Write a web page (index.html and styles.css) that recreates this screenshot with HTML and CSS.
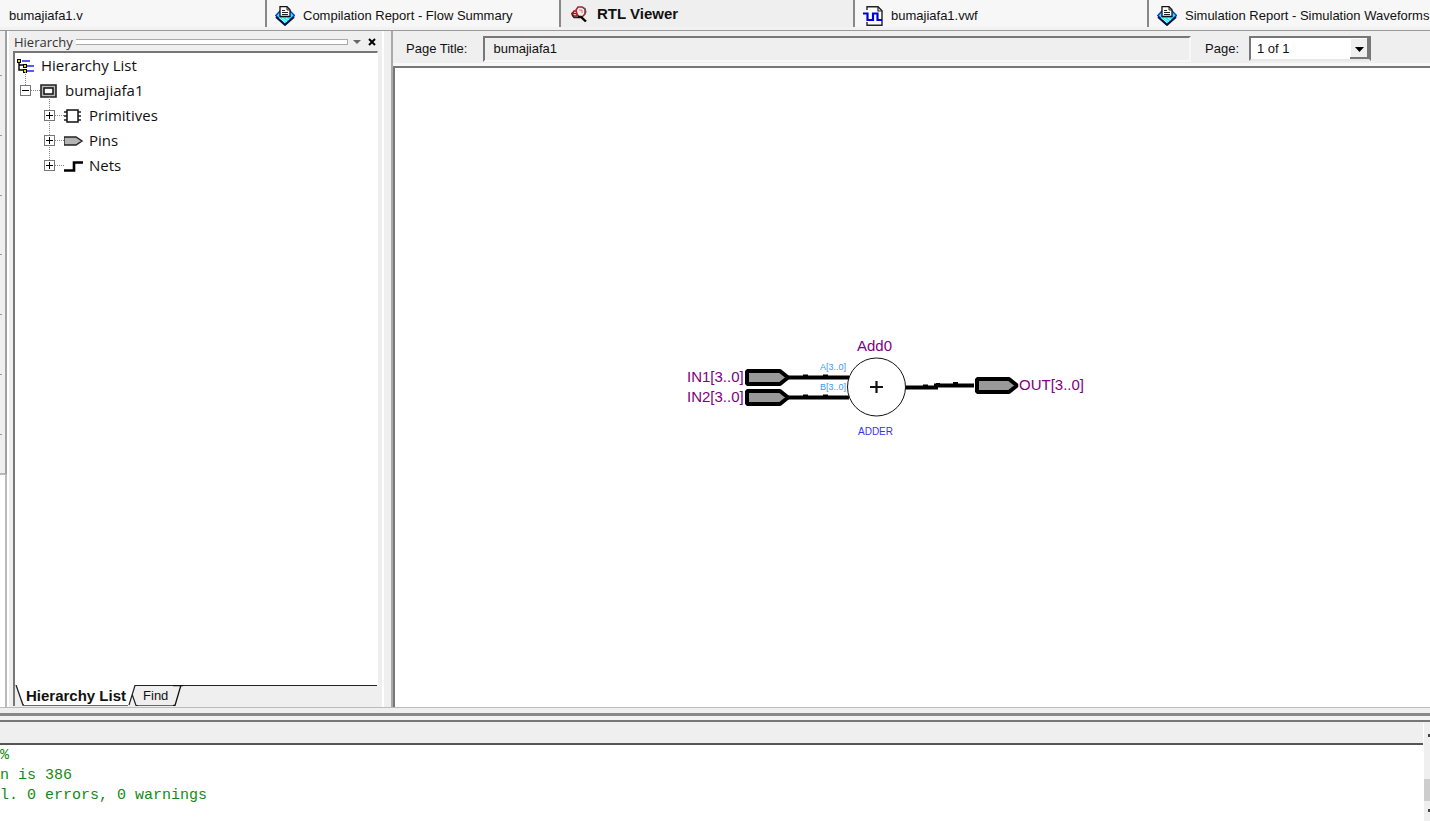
FILE: index.html
```html
<!DOCTYPE html>
<html lang="en">
<head>
<meta charset="utf-8">
<title>RTL Viewer</title>
<link rel="stylesheet" href="styles.css">
</head>
<body>
<svg class="defs" width="0" height="0" aria-hidden="true">
  <symbol id="report" viewBox="0 0 20 20">
    <path d="M.800 9.500 6 4h8l5.500 5.500-9.500 9z" fill="#25e8fa" stroke="#1238d8" stroke-width="1.400"/>
    <path d="M1 11l9 8 9-8" fill="none" stroke="#00103a" stroke-width="1.800"/>
    <path d="M4 11.500l6 5M7 12l5 3.500M11 12l3 2" stroke="#c9ffff" stroke-width="1"/>
    <path d="M5 .700h7l3 3v6.800H5z" fill="#fff" stroke="#111" stroke-width="1.300"/>
    <path d="M12 1v3h3M7 4.500h3M7 6.500h6M7 8.500h6" fill="none" stroke="#222" stroke-width="1"/>
  </symbol>
</svg>

<nav class="docs">
  <button class="doc doc-first">bumajiafa1.v</button>
  <button class="doc"><svg class="doc-icon"><use href="#report"/></svg>Compilation Report - Flow Summary</button>
  <button class="doc active">
    <svg class="doc-icon small" viewBox="0 0 16 16"><path d="M1 8l2-3h3v5H3z" fill="#fff" stroke="#a01018" stroke-width="1.500"/><path d="M0 7.500h5" stroke="#a01018" stroke-width="1.500"/><path d="M1 9l2 2.500h4" fill="none" stroke="#222" stroke-width="1.300"/><path d="M5 4l2-3h4l3 2v5l-3 3H8L6 8z" fill="#f4eaea" stroke="#b02028" stroke-width="1.500"/><path d="M11 1l3 2 1 3-2 3" fill="none" stroke="#555" stroke-width="1.200"/><path d="M8 4h3v3" fill="none" stroke="#cc7078" stroke-width="1"/><path d="M7 11h3l5 4.500" fill="none" stroke="#000" stroke-width="2.300"/></svg>RTL Viewer</button>
  <button class="doc">
    <svg class="doc-icon" viewBox="0 0 20 20"><path d="M4 .700h11l4 4V19.300H4z" fill="#fff" stroke="#222" stroke-width="1.400"/><path d="M15 1v4h4" fill="none" stroke="#222" stroke-width="1.200"/><path d="M3 4v12" stroke="#f7f7f7" stroke-width="4"/><path d="M0 7.500h4.500v6.500H10V7.500h4.500v6.500H19" fill="none" stroke="#0000d8" stroke-width="2.200"/></svg>bumajiafa1.vwf</button>
  <button class="doc"><svg class="doc-icon"><use href="#report"/></svg>Simulation Report - Simulation Waveforms</button>
</nav>

<main class="work">
  <div class="edge">
    <div class="dock"><i></i><i></i><i></i><i></i><i></i><i></i><i></i></div>
  </div>

  <aside class="side">
    <header class="side-head">
      <h2>Hierarchy</h2><span class="grip"></span>
      <button class="mini" aria-label="Menu"><svg width="8" height="4"><path d="M0 0h8L4 4z" fill="#666"/></svg></button>
      <button class="mini" aria-label="Close"><svg width="8" height="8"><path d="M1 1l6 6M7 1 1 7" stroke="#000" stroke-width="2"/></svg></button>
    </header>
    <div class="tree">
      <div class="row root">
        <svg class="glyph" viewBox="0 0 20 16"><path d="M3 3v9h5M3 7h5" fill="none" stroke="#000" stroke-width="1.400"/><path d="M6 3h8M11 8h7M11 13h7" stroke="#2222f0" stroke-width="1.500"/><path d="M1 1h4v4H1zM7 6h4v4H7zM7 11h4v4H7z" fill="#000"/><path d="M2 2h2v2H2zM8 7h2v2H8zM8 12h2v2H8z" fill="#e8d800"/></svg>
        <span>Hierarchy List</span>
      </div>
      <div class="row">
        <button class="toggle open" aria-label="Collapse bumajiafa1"></button><i class="dots"></i>
        <svg class="glyph" viewBox="0 0 20 16"><path d="M1 2h15v12H1z" fill="#bbb" stroke="#222" stroke-width="1.600"/><path d="M4 5h9v6H4z" fill="#fff" stroke="#111" stroke-width="1.500"/></svg>
        <span>bumajiafa1</span>
      </div>
      <div class="row child">
        <button class="toggle" aria-label="Expand Primitives"></button><i class="dots"></i>
        <svg class="glyph" viewBox="0 0 20 16"><path d="M0 4h17M0 8h17M0 12h17" stroke="#222" stroke-width="1.300"/><path d="M3 2h11v12H3z" fill="#fff" stroke="#111" stroke-width="1.500"/></svg>
        <span>Primitives</span>
      </div>
      <div class="row child">
        <button class="toggle" aria-label="Expand Pins"></button><i class="dots"></i>
        <svg class="glyph" viewBox="0 0 20 16"><path d="M0 4h12l6 4-6 4H0z" fill="#b4b4b4" stroke="#222" stroke-width="1.400"/></svg>
        <span>Pins</span>
      </div>
      <div class="row child">
        <button class="toggle" aria-label="Expand Nets"></button><i class="dots"></i>
        <svg class="glyph" viewBox="0 0 20 16"><path d="M0 12.500h10V4.500h9" fill="none" stroke="#000" stroke-width="2.600"/></svg>
        <span>Nets</span>
      </div>
    </div>
    <div class="sheets">
      <svg width="9" height="21"><path d="M0 0h9v20H8z" fill="#fff"/><path d="M1 0l7 20h1" fill="none" stroke="#222" stroke-width="1.300"/></svg>
      <button class="sheet current">Hierarchy List</button>
      <svg width="10" height="21"><path d="M0 0h7L1 20H0z" fill="#fff"/><path d="M10 .500H7L1 20M4 9l4 11.500h2" fill="none" stroke="#222" stroke-width="1.200"/></svg>
      <button class="sheet">Find</button>
      <svg width="10" height="21"><path d="M0 .500h10M8 0 2 20.500H0" fill="none" stroke="#111" stroke-width="1.300"/></svg>
      <span class="rest"></span>
    </div>
  </aside>

  <section class="viewer">
    <div class="bar">
      <label for="title">Page Title:</label>
      <input id="title" class="title" type="text" value="bumajiafa1" readonly>
      <label for="page">Page:</label>
      <span class="pick">
        <select id="page"><option>1 of 1</option></select>
        <svg class="arrow" width="19" height="21" aria-hidden="true"><path d="M.500.500h18v20H.500z" fill="#f0f0f0" stroke="#fff"/><path d="M18 0v20H0" fill="none" stroke="#777" stroke-width="2"/><path d="M5 9h9l-4.500 5z" fill="#000"/></svg>
      </span>
    </div>
    <div class="canvas">
      <svg class="schematic" width="400" height="110" viewBox="0 0 400 110" role="img" aria-label="Adder schematic">
        <g fill="none" stroke="#000" stroke-width="4">
          <path d="M101 42.500h63M101 62.500h63"/>
          <path d="M220 52.500h31v-2h38"/>
          <g fill="#999"><path d="M62 36h33l8 6.500-8 6.500H62zM62 56h33l8 6.500-8 6.500H62zM292 44h32l8 6.500-8 6.500h-32z" stroke-linejoin="bevel"/></g>
          <path d="M118 41h5M138 41h5M118 61h5M138 61h5M238 51h5M251 49.500h4M268 48.500h5" stroke-width="3"/>
        </g>
        <circle cx="191.500" cy="52" r="29" fill="#fff" stroke="#111" stroke-width="1"/>
        <path d="M185 52h13M191.500 46v12" stroke="#111" stroke-width="2.200"/>
        <g class="net"><text x="2" y="47">IN1[3..0]</text><text x="2" y="67">IN2[3..0]</text><text x="334" y="55">OUT[3..0]</text><text x="172" y="16">Add0</text></g>
        <g class="port"><text x="135" y="35">A[3..0]</text><text x="135" y="55">B[3..0]</text></g>
        <text class="kind" x="173" y="100">ADDER</text>
      </svg>
    </div>
  </section>
</main>

<footer class="log">
  <div class="log-main">
    <div class="log-head"></div>
    <pre class="lines">%
n is 386
l. 0 errors, 0 warnings</pre>
  </div>
  <div class="scroll"><i class="tip"></i><i class="thumb"></i><i class="tip"></i></div>
</footer>
</body>
</html>
```

FILE: styles.css
```css
* { box-sizing: border-box; }
body {
  margin: 0;
  height: 100vh;
  display: flex;
  flex-direction: column;
  overflow: hidden;
  background: #efefef;
  color: #111;
  font: 13px/16px "Liberation Sans", Arial, sans-serif;
}
button, input, select { font: inherit; color: inherit; }
button { background: none; border: 0; padding: 0; }
.defs { position: absolute; }

/* document tabs */
.docs {
  flex: none;
  display: flex;
  height: 31px;
  padding-bottom: 3px;
  background: #f7f7f7;
  border-bottom: 1px solid #999;
  box-shadow: inset 0 -3px #f2f2f2;
  overflow: hidden;
}
.doc {
  flex: none;
  width: 294px;
  display: flex;
  align-items: center;
  gap: 8px;
  padding: 4px 0 0 8px;
  border-right: 2px solid #888;
  white-space: nowrap;
}
.doc-first { width: 267px; padding-left: 9px; }
.doc-icon { width: 20px; height: 20px; }
.doc-icon.small { width: 16px; height: 16px; }
.doc.active {
  gap: 10px;
  padding: 0 0 0 10px;
  background: #efefef;
  font-size: 15px;
  font-weight: bold;
}

.work { flex: 1; min-height: 0; display: flex; }

/* edge of the neighbouring dock */
.edge { flex: none; width: 7px; background: linear-gradient(90deg, #fff 5px, #bbb 5px); }
.dock {
  height: 444px;
  padding: 44px 0 38px;
  display: flex;
  flex-direction: column;
  justify-content: space-between;
  background: #efefef;
  border-right: 2px solid #a0a0a0;
  border-bottom: 2px solid #b8b8b8;
}
.dock i { width: 2px; height: 1px; background: #999; }

/* hierarchy panel */
.side {
  flex: none;
  width: 377px;
  display: flex;
  flex-direction: column;
  padding: 2px 4px 1px 4px;
  border-left: 2px solid #fff;
  border-right: 2px solid #fff;
}
.side-head { height: 18px; display: flex; align-items: center; gap: 3px; padding-left: 1px; }
.side-head h2 { margin: 0; font: 13px/16px "Open Sans", "Noto Sans", sans-serif; color: #333; }
.grip {
  flex: 1;
  height: 6px;
  border: 1px solid #aaa;
  border-left: 0;
  background: #fff;
}
.mini { width: 12px; height: 16px; display: grid; place-items: center; }
.tree {
  flex: 1;
  background: #fff;
  border-top: 2px solid #777;
  border-left: 2px solid #777;
  border-right: 1px solid #fff;
  font: 15px/25px "Open Sans", "Noto Sans", sans-serif;
}
.row { height: 25px; display: flex; align-items: center; padding-left: 5px; }
.root { padding-left: 1px; }
.child { padding-left: 29px; }
.glyph { width: 20px; height: 16px; margin-right: 5px; }
.toggle {
  position: relative;
  width: 11px;
  height: 11px;
  border: 1px solid #777;
  background:
    linear-gradient(#000, #000) center / 7px 1px no-repeat,
    linear-gradient(#000, #000) center / 1px 7px no-repeat,
    #fff;
}
.toggle.open { background: linear-gradient(#000, #000) center / 7px 1px no-repeat, #fff; }
.toggle::before {
  content: "";
  position: absolute;
  left: 4px;
  bottom: 10px;
  height: 13px;
  border-left: 1px dotted #888;
}
.dots { width: 9px; border-top: 1px dotted #888; }
.sheets {
  flex: none;
  height: 21px;
  display: flex;
  margin-right: 1px;
  border-left: 2px solid #777;
}
.sheet { border-top: 1px solid #222; border-bottom: 1px solid #666; padding: 0 5px; }
.sheet.current { border-top-color: #fff; background: #fff; font-size: 15px; font-weight: bold; padding: 0 2px; }
.sheets svg { flex: none; }
.rest { flex: 1; border-top: 1px solid #222; }

/* schematic viewer */
.viewer {
  flex: 1;
  min-width: 0;
  display: flex;
  flex-direction: column;
  margin-left: 7px;
  border-left: 2px solid #aaa;
}
.bar {
  flex: none;
  height: 35px;
  display: flex;
  align-items: center;
  padding: 0 59px 0 13px;
  box-shadow: inset 0 -3px #f8f8f8;
}
.title {
  flex: 1;
  min-width: 0;
  height: 26px;
  margin: 0 14px 0 16px;
  padding: 0 8px;
  background: #efefef;
  border: 2px solid;
  border-color: #777 #f8f8f8 #f8f8f8 #777;
}
.pick { position: relative; width: 122px; margin-left: 10px; }
.pick select {
  width: 100%;
  height: 25px;
  padding: 0 6px;
  background: #fff;
  border: 2px solid #777;
  border-bottom-color: #e8e8e8;
  border-radius: 0;
  appearance: none;
}
.arrow { position: absolute; right: 2px; top: 2px; pointer-events: none; }
.canvas {
  flex: 1;
  position: relative;
  background: #fff;
  border-top: 2px solid #777;
  border-left: 2px solid #777;
}
.schematic { position: absolute; left: 290px; top: 267px; }
.net { font-size: 15px; fill: #800080; }
.port { font-size: 9px; fill: #3399ff; }
.kind { font-size: 10px; fill: #3333ff; }

/* message log */
.log {
  flex: none;
  height: 114px;
  display: flex;
  padding-top: 15px;
  border-top: 1px solid #bbb;
  background: linear-gradient(#efefef 5px, #888 5px, #888 8px, #f2f2f2 8px, #f2f2f2 12px, #777 12px, #777 14px, #efefef 14px);
}
.log-main { flex: 1; display: flex; flex-direction: column; overflow: hidden; background: #fff; }
.log-head { height: 22px; background: #efefef; border-bottom: 2px solid #555; }
.lines {
  margin: 1px 0 0;
  color: #138a13;
  font: 15px/20px "Liberation Mono", "Courier New", monospace;
}
.scroll {
  width: 7px;
  display: flex;
  flex-direction: column;
  align-items: flex-end;
  justify-content: space-between;
  padding: 11px 0 9px;
  border-left: 1px solid #fff;
}
.thumb { width: 6px; height: 22px; margin-top: 34px; background: #cdcdcd; }
.tip { width: 2px; height: 3px; background: #444; }
```
